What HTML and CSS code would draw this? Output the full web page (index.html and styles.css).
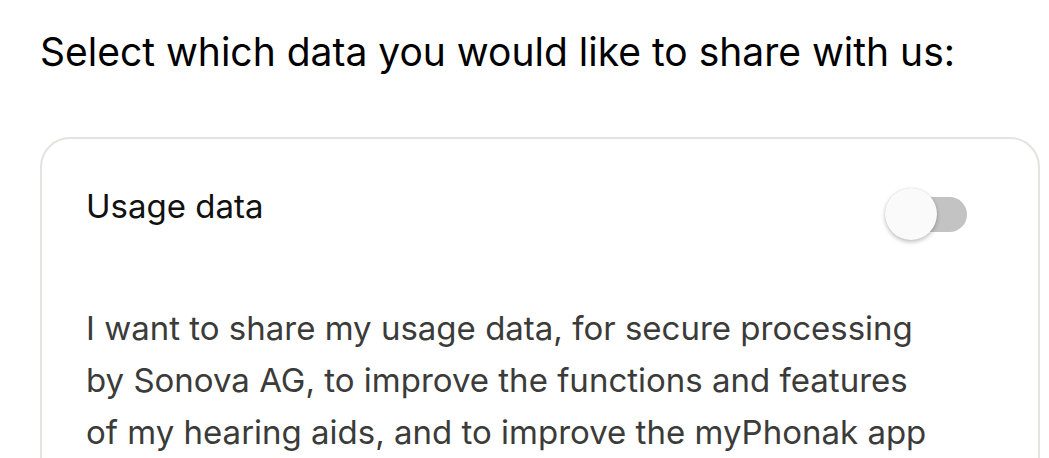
FILE: index.html
```html
<!DOCTYPE html>
<html><head><meta charset="utf-8"><link rel="stylesheet" href="styles.css"></head>
<body>
<main class="page">
  <h1 class="title">Select which data you would like to share with us:</h1>
  <section class="card">
    <div class="row">
      <h2 class="row-label">Usage data</h2>
      <div class="toggle" role="switch" aria-checked="false">
        <span class="track"></span>
        <span class="thumb"></span>
      </div>
    </div>
    <p class="desc">I want to share my usage data, for secure processing by Sonova AG, to improve the functions and features of my hearing aids, and to improve the myPhonak app</p>
  </section>
</main>
</body></html>
```
FILE: styles.css
```css
html,body{margin:0;padding:0;background:#fff;}
body{height:458px;overflow:hidden;font-family:"Inter","Liberation Sans",sans-serif;}
.page{padding:28px 9px 0 40px;}
.title{margin:0;font-size:39px;line-height:47px;font-weight:400;color:#000;white-space:nowrap;}
.card{margin-top:62px;border:2px solid #e3e3df;border-radius:30px;padding:47px 71px 40px 44px;min-height:500px;}
.row{display:flex;justify-content:space-between;align-items:flex-start;}
.row-label{margin:0;font-size:33px;line-height:40px;font-weight:400;color:#111;}
.toggle{position:relative;width:82px;height:52px;margin-top:2px;}
.track{position:absolute;right:0;top:9px;width:66px;height:35px;border-radius:18px;background:#c3c3c3;}
.thumb{position:absolute;left:0;top:0;width:52px;height:52px;border-radius:50%;background:#fafafa;box-shadow:0 2px 4px rgba(0,0,0,.25),0 0 1px rgba(0,0,0,.15);}
.desc{margin:62px 0 0;max-width:848px;font-size:33px;line-height:52px;color:#3b3b39;}
```
